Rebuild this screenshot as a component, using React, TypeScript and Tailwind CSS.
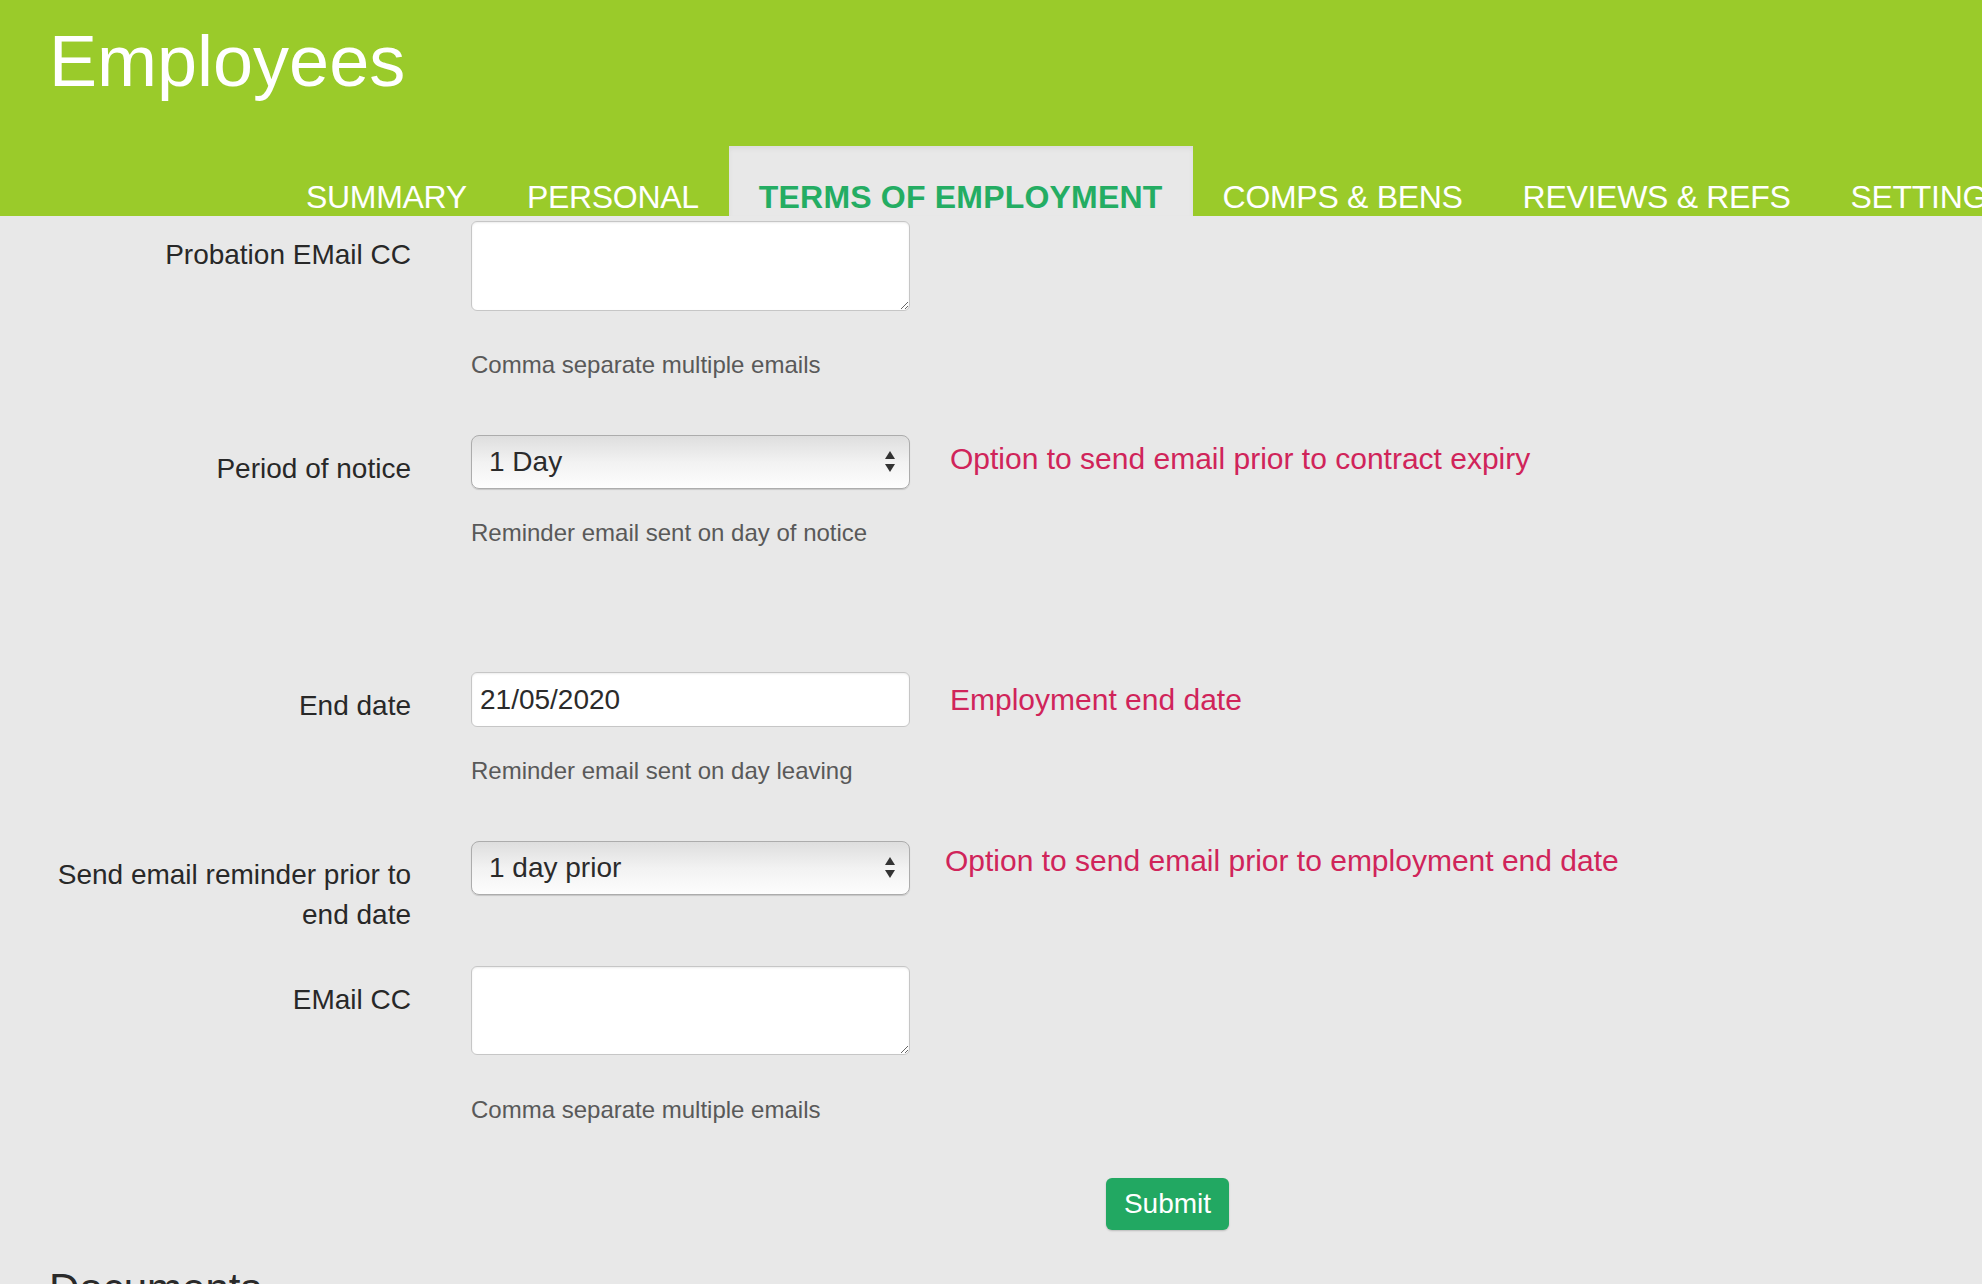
import React from 'react';

const tabs = ['SUMMARY', 'PERSONAL', 'TERMS OF EMPLOYMENT', 'COMPS & BENS', 'REVIEWS & REFS', 'SETTINGS'];
const ACTIVE = 'TERMS OF EMPLOYMENT';

const SelectArrows: React.FC = () => (
    <svg className="pointer-events-none absolute right-[14px] top-1/2 -translate-y-1/2" width="12" height="22" viewBox="0 0 12 22">
        <polygon points="6,0 11,8 1,8" fill="#333" />
        <polygon points="1,13 11,13 6,21" fill="#333" />
    </svg>
);

const FakeSelect: React.FC<{ value: string }> = ({ value }) => (
    <div className="relative">
        <select
            defaultValue={value}
            className="block w-full h-[54px] appearance-none rounded-[8px] border border-[#acacac] bg-gradient-to-b from-[#dedede] via-[#f2f2f2] to-[#fdfdfd] pl-[17px] pr-10 text-[28px] text-[#2b2b2b] shadow-[0_1px_1px_rgba(0,0,0,0.15)] outline-none"
        >
            <option>{value}</option>
        </select>
        <SelectArrows />
    </div>
);

const Label: React.FC<{ children: React.ReactNode }> = ({ children }) => (
    <label className="ml-[30px] w-[381px] shrink-0 pt-[14px] text-right text-[28px] leading-[40px] text-[#282828]">
        {children}
    </label>
);

const Help: React.FC<{ children: React.ReactNode; mt: string }> = ({ children, mt }) => (
    <p className={`${mt} text-[24px] leading-[34px] text-[#595959]`}>{children}</p>
);

const Note: React.FC<{ children: React.ReactNode; className: string }> = ({ children, className }) => (
    <p className={`${className} text-[30px] leading-[40px] text-[#d0245a] whitespace-nowrap`}>{children}</p>
);

export default function App() {
    return (
        <div className="min-h-screen w-full overflow-hidden bg-[#e8e8e8] font-['Liberation_Sans',Arial,sans-serif]">
            <header className="flex h-[216px] flex-col justify-between bg-[#9acb2a]">
                <h1 className="pl-[49px] pt-[25px] text-[72px] leading-none text-white">Employees</h1>
                <nav className="ml-[276px] flex items-end whitespace-nowrap">
                    {tabs.map((t) => (
                        <div
                            key={t}
                            className={`h-[70px] px-[30px] pt-[33px] text-[32px] leading-[36px] ${
                                t === ACTIVE
                                    ? 'bg-[#e8e8e8] font-bold tracking-[0.2px] text-[#24ad63] shadow-[inset_0_3px_5px_rgba(0,0,0,0.05)]'
                                    : 'text-white tracking-[-0.3px]'
                            }`}
                        >
                            {t}
                        </div>
                    ))}
                </nav>
            </header>

            <form className="pt-[5px]" onSubmit={(e) => e.preventDefault()}>
                <div className="mb-[53px] flex">
                    <Label>Probation EMail CC</Label>
                    <div className="ml-[60px] w-[439px] shrink-0">
                        <textarea className="block h-[90px] w-full rounded-[6px] border border-[#c6c6c6] bg-white shadow-[inset_0_1px_2px_rgba(0,0,0,0.08)] outline-none" />
                        <Help mt="mt-[37px]">Comma separate multiple emails</Help>
                    </div>
                </div>

                <div className="mb-[122px] flex">
                    <Label>Period of notice</Label>
                    <div className="ml-[60px] w-[439px] shrink-0">
                        <FakeSelect value="1 Day" />
                        <Help mt="mt-[27px]">Reminder email sent on day of notice</Help>
                    </div>
                    <Note className="ml-[40px] mt-[4px]">Option to send email prior to contract expiry</Note>
                </div>

                <div className="mb-[53px] flex">
                    <Label>End date</Label>
                    <div className="ml-[60px] w-[439px] shrink-0">
                        <input
                            defaultValue="21/05/2020"
                            className="block h-[55px] w-full rounded-[6px] border border-[#c6c6c6] bg-white pl-[8px] text-[28px] text-[#2b2b2b] shadow-[inset_0_1px_2px_rgba(0,0,0,0.08)] outline-none"
                        />
                        <Help mt="mt-[27px]">Reminder email sent on day leaving</Help>
                    </div>
                    <Note className="ml-[40px] mt-[8px]">Employment end date</Note>
                </div>

                <div className="mb-[31px] flex">
                    <Label>Send email reminder prior to end date</Label>
                    <div className="ml-[60px] w-[439px] shrink-0">
                        <FakeSelect value="1 day prior" />
                    </div>
                    <Note className="ml-[35px] mt-0">Option to send email prior to employment end date</Note>
                </div>

                <div className="flex">
                    <Label>EMail CC</Label>
                    <div className="ml-[60px] w-[439px] shrink-0">
                        <textarea className="block h-[89px] w-full rounded-[6px] border border-[#c6c6c6] bg-white shadow-[inset_0_1px_2px_rgba(0,0,0,0.08)] outline-none" />
                        <Help mt="mt-[38px]">Comma separate multiple emails</Help>
                    </div>
                </div>

                <button
                    type="submit"
                    className="ml-[1106px] mt-[51px] block h-[52px] w-[123px] rounded-[6px] bg-[#22a862] text-[28px] text-white shadow-[0_1px_2px_rgba(0,0,0,0.2)]"
                >
                    Submit
                </button>
            </form>

            <h3 className="ml-[49px] mt-[36px] text-[42px] leading-[1.1] text-[#2a2a2a]">Documents</h3>
        </div>
    );
}
